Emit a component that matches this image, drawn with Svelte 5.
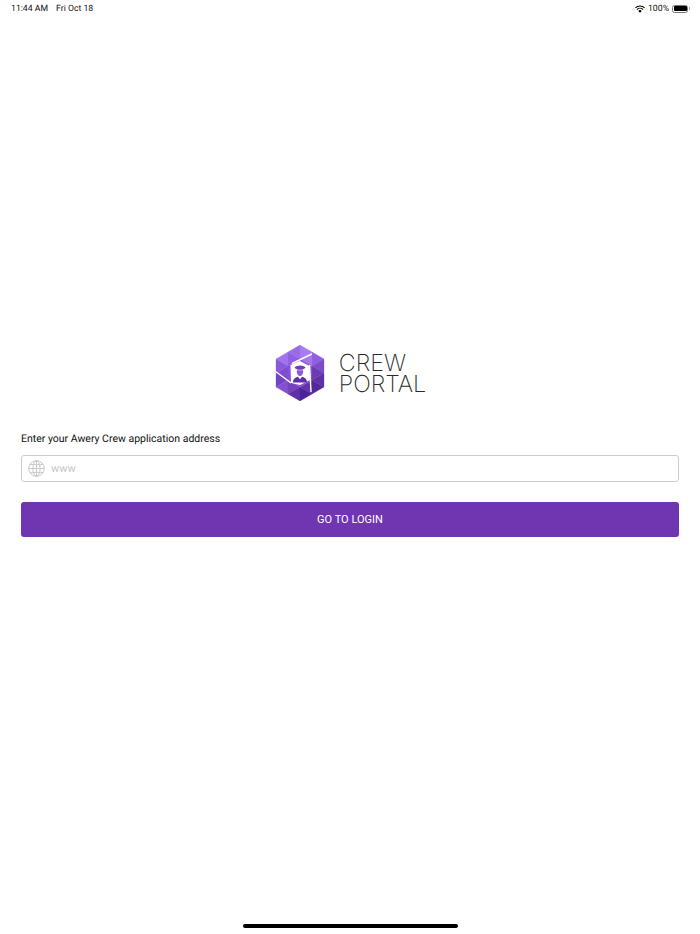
<script lang="ts">
  const facets = [
    { points: '25,0 37,7 25,14', fill: '#a77df0' },
    { points: '25,0 25,14 13,7', fill: '#9a6ce8' },
    { points: '37,7 49,14 37,21', fill: '#8f5fe0' },
    { points: '37,7 37,21 25,14', fill: '#a377ee' },
    { points: '13,7 25,14 13,21', fill: '#8f5ee2' },
    { points: '13,7 13,21 1,14', fill: '#a173ee' },
    { points: '1,14 13,21 1,28', fill: '#8a58dc' },
    { points: '1,28 13,21 13,35', fill: '#7f4dd0' },
    { points: '1,28 13,35 1,42', fill: '#7544c4' },
    { points: '49,14 49,28 37,21', fill: '#7d4cc8' },
    { points: '49,28 37,21 37,35', fill: '#6b3bb0' },
    { points: '49,28 49,42 37,35', fill: '#5f31a4' },
    { points: '1,42 13,35 13,49', fill: '#8250d0' },
    { points: '13,35 25,42 13,49', fill: '#7343bf' },
    { points: '13,49 25,42 25,56', fill: '#5f2fa8' },
    { points: '25,42 37,35 37,49', fill: '#6434ac' },
    { points: '25,42 37,49 25,56', fill: '#4e2396' },
    { points: '37,35 49,42 37,49', fill: '#54289a' },
    { points: '13,21 25,14 37,21 37,35 25,42 13,35', fill: '#8452d4' }
  ];
</script>

<div class="screen">
  <header class="status">
    <div class="status__left">
      <span>11:44 AM</span>
      <span>Fri Oct 18</span>
    </div>
    <div class="status__right">
      <svg width="10" height="8" viewBox="0 0 20 15" aria-hidden="true">
        <path d="M10 15 6.6 11.4a4.8 4.8 0 0 1 6.8 0Z" fill="#000" />
        <path d="M4.6 9.4a7.6 7.6 0 0 1 10.8 0l1.5-1.6a9.8 9.8 0 0 0-13.8 0Z" fill="#000" />
        <path d="M1.5 6.2a12 12 0 0 1 17 0L20 4.6a14.2 14.2 0 0 0-20 0Z" fill="#000" />
      </svg>
      <span class="status__pct">100%</span>
      <div class="battery"><div class="battery__fill"></div></div>
      <div class="battery__nub"></div>
    </div>
  </header>

  <main class="content">
    <div class="logo">
      <svg class="logo__mark" width="50" height="56" viewBox="0 0 50 56" aria-hidden="true">
        {#each facets as f}
          <polygon points={f.points} fill={f.fill} stroke={f.fill} stroke-width="0.3" />
        {/each}
        <polygon points="25,16 34.5,21 35,35 25,40 16,38 15.5,20" fill="#fff" />
        <g fill="none" stroke="#fff" stroke-width="1.4">
          <path d="M17 18.5 37 9" />
          <path d="M1 26.8 16 38" />
          <path d="M34.6 20 36 47" />
        </g>
        <path d="M19.5 22.8c1.8-2.6 9.2-3.2 11 0-1.3 1-2.6 1.5-3 2h-5c-.4-.5-1.7-1-3-2Z" fill="#6f3fb8" />
        <path d="M21.8 25.2h6.4c.2 3.2-1 5.8-3.2 5.8s-3.4-2.6-3.2-5.8Z" fill="#8a5cd8" />
        <path d="M18 37.5c0-3.6 2.4-5 4.9-5.8l2.1 2.6 2.1-2.6c2.5.8 4.9 2.2 4.9 5.8Z" fill="#5f2fa8" />
      </svg>
      <div class="logo__text">
        <span>CREW</span>
        <span>PORTAL</span>
      </div>
    </div>

    <p class="label">Enter your Awery Crew application address</p>

    <div class="field">
      <svg width="17" height="17" viewBox="0 0 17 17" fill="none" stroke="#c9c9c9" stroke-width="1" aria-hidden="true">
        <circle cx="8.5" cy="8.5" r="7.8" />
        <ellipse cx="8.5" cy="8.5" rx="3.6" ry="7.8" />
        <path d="M8.5.7v15.6M.7 8.5h15.6M1.8 4.6h13.4M1.8 12.4h13.4" />
      </svg>
      <span class="field__placeholder">www</span>
    </div>

    <button class="submit" type="button">GO TO LOGIN</button>
  </main>

  <div class="home"></div>
</div>

<style>
  :global(body) {
    background: #fff;
  }

  .screen {
    display: flex;
    flex-direction: column;
    width: 700px;
    height: 934px;
    overflow: hidden;
    font-family: Roboto, "Liberation Sans", sans-serif;
    color: #000;
    background: #fff;
    text-rendering: geometricPrecision;
  }

  .status {
    display: flex;
    justify-content: space-between;
    align-items: center;
    box-sizing: border-box;
    height: 16px;
    padding: 1px 10px 0 11px;
    font-size: 8.7px;
    color: #111;
  }

  .status__left {
    display: flex;
    gap: 8px;
  }

  .status__right {
    display: flex;
    align-items: center;
  }

  .status__pct {
    margin: 0 3px 0 3px;
  }

  .battery {
    width: 16px;
    height: 8px;
    padding: 0.5px;
    box-sizing: border-box;
    border: 1px solid #777;
    border-radius: 2.5px;
  }

  .battery__fill {
    height: 100%;
    background: #000;
    border-radius: 1px;
  }

  .battery__nub {
    width: 1px;
    height: 3px;
    margin-left: 1px;
    background: #aaa;
  }

  .content {
    display: flex;
    flex-direction: column;
    padding: 329px 21px 0;
  }

  .logo {
    display: flex;
    justify-content: center;
    align-items: center;
    gap: 14px;
    height: 56px;
    padding-left: 1px;
  }

  .logo__text {
    display: flex;
    flex-direction: column;
    font-family: Inter, sans-serif;
    font-weight: 200;
    font-size: 23.3px;
    line-height: 21.5px;
    color: #2a2a2a;
  }

  .label {
    margin: 31px 0 0;
    font-size: 10.5px;
    line-height: 13px;
    color: #111;
  }

  .field {
    display: flex;
    align-items: center;
    gap: 6px;
    box-sizing: border-box;
    height: 27px;
    margin-top: 10px;
    padding: 0 6px;
    border: 1px solid #cdcdcd;
    border-radius: 3px;
  }

  .field__placeholder {
    font-size: 11px;
    color: #c6c6c6;
  }

  .submit {
    height: 35px;
    margin-top: 20px;
    padding: 0;
    border: 0;
    border-radius: 3px;
    font-family: inherit;
    font-size: 11px;
    color: #fff;
    background: #7035b0;
  }

  .home {
    align-self: center;
    width: 215px;
    height: 4px;
    margin-top: auto;
    margin-bottom: 6px;
    border-radius: 2px;
    background: #000;
  }
</style>
